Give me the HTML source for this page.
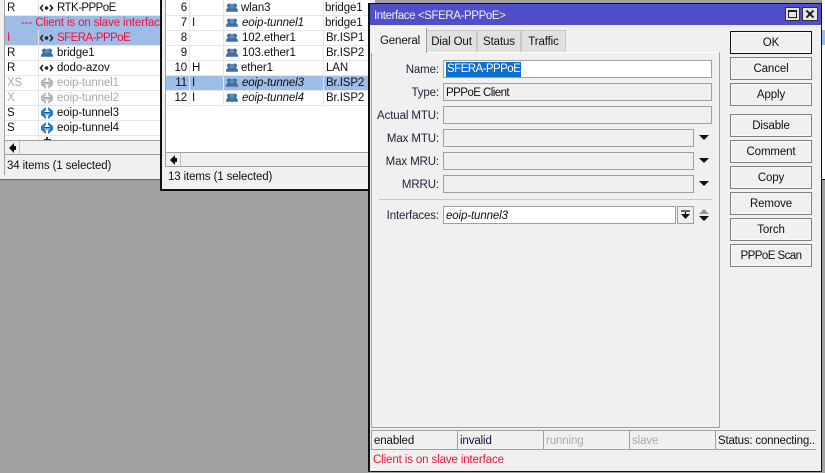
<!DOCTYPE html>
<html><head><meta charset="utf-8">
<style>
html,body{margin:0;padding:0}
body{width:825px;height:473px;background:#a0a0a0;position:relative;overflow:hidden;font:11.5px/15px "Liberation Sans",sans-serif;letter-spacing:-.12px;color:#101010}
div{box-sizing:border-box;position:absolute;white-space:nowrap}
.t{height:15px;line-height:17px}
.rl{height:1px;background:#e6e6e6}
.cl{width:1px;background:#e6e6e6}
.sb{background:#f0f0f0}
.f{background:#f0f0f0;border:1px solid #a0a0a0;height:18px;line-height:18px;padding-left:2px}
.w{background:#fff}
.l{text-align:right;width:70px;left:369px;height:18px;line-height:20px;color:#22223a}
.b{left:730px;width:82px;height:23px;border:1px solid #808080;background:#f0f0f0;text-align:center;line-height:22px;box-shadow:inset 0 0 0 1px #f8f8f8}
.tab{background:#e1e1e1;border:1px solid #c8c8c8;border-bottom:0;top:30px;height:22px;line-height:23px;text-align:center}
.s{top:430px;height:20px;border-top:1px solid #a0a0a0;border-left:1px solid #a0a0a0;line-height:20px;padding-left:2px;background:#f0f0f0;border-bottom:1px solid #a0a0a0}
.cp{letter-spacing:-.55px}
svg{position:absolute;overflow:visible}
.g{color:#aaa}.r{color:#f0103c}.i{font-style:italic}
</style></head><body>
<svg width="0" height="0" style="position:absolute"><defs>
<g id="p" transform="scale(.8)"><circle cx="4" cy="3.500" r="2.800" fill="#3f6f9f"/><circle cx="11" cy="3.500" r="2.800" fill="#3f6f9f"/><circle cx="7.500" cy="4" r="3" fill="#5b8bbb"/><path d="M0 11c0-4 2-5 4-5s3 1 3.500 1 1.500-1 3.500-1 4 1 4 5z" fill="#3f6f9f"/></g>
<g id="e"><circle cx="6.500" cy="5" r="1.800" fill="#222"/><path d="M3 2L0.500 5 3 8M10 2l2.500 3L10 8" fill="none" stroke="#222" stroke-width="1.600"/></g>
<g id="tb"><path d="M5 0L0 4V8L5 12V9L3 7V5L5 3zM7 0L12 4V8L7 12V9L9 7V5L7 3z" fill="#1f7fd8"/><path d="M3 5.500H9M3 7H9" stroke="#14508f" stroke-width="1"/></g>
<g id="tg"><path d="M5 0L0 4V8L5 12V9L3 7V5L5 3zM7 0L12 4V8L7 12V9L9 7V5L7 3z" fill="#b8b8b8"/><path d="M3 5.500H9M3 7H9" stroke="#999" stroke-width="1"/></g>
<path id="dn" d="M0 0h10L5 5z" fill="#111"/>
<path id="lt" d="M5 0v3h2v4H5v3L0 5z" fill="#111"/>
</defs></svg>

<!-- rear window strip -->
<div style="left:822px;top:0;width:3px;height:179px;background:#fff"></div>
<div style="left:822px;top:30px;width:3px;height:15px;background:#9dbde6"></div>
<div style="left:822px;top:179px;width:3px;height:1px;background:#111"></div>

<!-- left window -->
<div style="left:0;top:0;width:162px;height:180px;background:#f0f0f0;border-right:2px solid #111;border-bottom:1px solid #666"></div>
<div style="left:4px;top:0;width:156px;height:175px;background:#fff;border-left:1px solid #a0a0a0"></div>
<div style="left:5px;top:15px;width:155px;height:15px;background:#9dbde6"></div>
<div style="left:5px;top:30px;width:155px;height:15px;background:#9dbde6"></div>
<div class="rl" style="left:5px;top:15px;width:155px"></div><div class="rl" style="left:5px;top:45px;width:155px"></div><div class="rl" style="left:5px;top:60px;width:155px"></div><div class="rl" style="left:5px;top:75px;width:155px"></div><div class="rl" style="left:5px;top:90px;width:155px"></div><div class="rl" style="left:5px;top:105px;width:155px"></div><div class="rl" style="left:5px;top:120px;width:155px"></div><div class="rl" style="left:5px;top:135px;width:155px"></div>
<div class="cl" style="left:38px;top:0;height:15px"></div><div class="cl" style="left:38px;top:30px;height:110px"></div>
<div class="t" style="left:7px;top:0">R</div><div class="t cp" style="left:57px;top:0">RTK-PPPoE</div>
<svg style="left:40px;top:3px" width="13" height="10"><use href="#e"/></svg>
<div class="t r" style="left:21px;top:15px">--- Client is on slave interface</div>
<div class="t r" style="left:7px;top:30px">I</div><div class="t r cp" style="left:57px;top:30px">SFERA-PPPoE</div>
<svg style="left:40px;top:33px" width="13" height="10"><use href="#e"/></svg>
<div class="t" style="left:7px;top:45px">R</div><div class="t" style="left:57px;top:45px">bridge1</div>
<svg style="left:41px;top:48px" width="12" height="9"><use href="#p"/></svg>
<div class="t" style="left:7px;top:60px">R</div><div class="t" style="left:57px;top:60px">dodo-azov</div>
<svg style="left:40px;top:63px" width="13" height="10"><use href="#e"/></svg>
<div class="t g" style="left:7px;top:75px">XS</div><div class="t g" style="left:57px;top:75px">eoip-tunnel1</div>
<svg style="left:41px;top:77px" width="12" height="12"><use href="#tg"/></svg>
<div class="t g" style="left:7px;top:90px">X</div><div class="t g" style="left:57px;top:90px">eoip-tunnel2</div>
<svg style="left:41px;top:92px" width="12" height="12"><use href="#tg"/></svg>
<div class="t" style="left:7px;top:105px">S</div><div class="t" style="left:57px;top:105px">eoip-tunnel3</div>
<svg style="left:41px;top:107px" width="12" height="12"><use href="#tb"/></svg>
<div class="t" style="left:7px;top:120px">S</div><div class="t" style="left:57px;top:120px">eoip-tunnel4</div>
<svg style="left:41px;top:122px" width="12" height="12"><use href="#tb"/></svg>
<svg style="left:44px;top:137px" width="7" height="3"><path d="M3 0v3M0 3h7" stroke="#333" stroke-width="2"/></svg>
<div class="sb" style="left:5px;top:140px;width:155px;height:15px;border-top:1px solid #a0a0a0;border-bottom:1px solid #a0a0a0"></div>
<div style="left:5px;top:141px;width:15px;height:13px;background:#f0f0f0;border-right:1px solid #c0c0c0"></div>
<svg style="left:9px;top:143px" width="7" height="10"><use href="#lt"/></svg>
<div style="left:5px;top:155px;width:155px;height:20px;background:#f0f0f0"></div>
<div class="t" style="left:7px;top:158px">34 items (1 selected)</div>

<!-- middle window -->
<div style="left:160px;top:0;width:215px;height:191px;background:#f0f0f0;border-left:2px solid #111;border-bottom:2px solid #111"></div>
<div style="left:165px;top:0;width:204px;height:152px;background:#fff;border-left:1px solid #a0a0a0"></div>
<div style="left:166px;top:75px;width:203px;height:15px;background:#9dbde6"></div>
<div class="rl" style="left:166px;top:15px;width:203px"></div><div class="rl" style="left:166px;top:30px;width:203px"></div><div class="rl" style="left:166px;top:45px;width:203px"></div><div class="rl" style="left:166px;top:60px;width:203px"></div><div class="rl" style="left:166px;top:75px;width:203px"></div><div class="rl" style="left:166px;top:90px;width:203px"></div><div class="rl" style="left:166px;top:105px;width:203px"></div>
<div class="cl" style="left:189px;top:0;height:105px"></div><div class="cl" style="left:223px;top:0;height:105px"></div><div class="cl" style="left:323px;top:0;height:105px"></div>
<div class="t" style="left:167px;width:20px;text-align:right;top:0">6</div><div class="t" style="left:241px;top:0">wlan3</div><div class="t" style="left:325px;top:0">bridge1</div>
<div class="t" style="left:167px;width:20px;text-align:right;top:15px">7</div><div class="t" style="left:192px;top:15px">I</div><div class="t i" style="left:242px;top:15px">eoip-tunnel1</div><div class="t" style="left:325px;top:15px">bridge1</div>
<div class="t" style="left:167px;width:20px;text-align:right;top:30px">8</div><div class="t" style="left:242px;top:30px">102.ether1</div><div class="t" style="left:326px;top:30px">Br.ISP1</div>
<div class="t" style="left:167px;width:20px;text-align:right;top:45px">9</div><div class="t" style="left:242px;top:45px">103.ether1</div><div class="t" style="left:326px;top:45px">Br.ISP2</div>
<div class="t" style="left:167px;width:20px;text-align:right;top:60px">10</div><div class="t" style="left:192px;top:60px">H</div><div class="t" style="left:241px;top:60px">ether1</div><div class="t" style="left:326px;top:60px">LAN</div>
<div class="t" style="left:167px;width:20px;text-align:right;top:75px">11</div><div class="t" style="left:192px;top:75px">I</div><div class="t i" style="left:242px;top:75px">eoip-tunnel3</div><div class="t" style="left:326px;top:75px">Br.ISP2</div>
<div class="t" style="left:167px;width:20px;text-align:right;top:90px">12</div><div class="t" style="left:192px;top:90px">I</div><div class="t i" style="left:242px;top:90px">eoip-tunnel4</div><div class="t" style="left:326px;top:90px">Br.ISP2</div>
<svg style="left:226px;top:3px" width="12" height="9"><use href="#p"/></svg>
<svg style="left:226px;top:18px" width="12" height="9"><use href="#p"/></svg>
<svg style="left:226px;top:33px" width="12" height="9"><use href="#p"/></svg>
<svg style="left:226px;top:48px" width="12" height="9"><use href="#p"/></svg>
<svg style="left:226px;top:63px" width="12" height="9"><use href="#p"/></svg>
<svg style="left:226px;top:78px" width="12" height="9"><use href="#p"/></svg>
<svg style="left:226px;top:93px" width="12" height="9"><use href="#p"/></svg>
<div class="sb" style="left:165px;top:152px;width:204px;height:15px;border-top:1px solid #a0a0a0;border-bottom:1px solid #a0a0a0;border-left:1px solid #a0a0a0"></div>
<div style="left:166px;top:153px;width:15px;height:13px;background:#f0f0f0;border-right:1px solid #c0c0c0"></div>
<svg style="left:170px;top:155px" width="7" height="10"><use href="#lt"/></svg>
<div class="t" style="left:168px;top:169px">13 items (1 selected)</div>

<!-- dialog -->
<div style="left:368px;top:3px;width:454px;height:469px;background:#f0f0f0;border:1px solid #111;border-left-width:2px"></div>
<div style="left:370px;top:4px;width:451px;height:21px;background:#4f50c9;color:#f0f0f0;line-height:25px;padding-left:4px;letter-spacing:-.4px">Interface &lt;SFERA-PPPoE&gt;</div>
<div style="left:785px;top:7px;width:15px;height:14px;background:#e4e4e4;border:1px solid #333"></div>
<div style="left:788px;top:10px;width:9px;height:8px;border:1px solid #222;border-top-width:2px"></div>
<div style="left:802px;top:7px;width:16px;height:14px;background:#e4e4e4;border:1px solid #333"></div>
<svg style="left:806px;top:10px" width="8" height="8"><path d="M0.500 0.500l7 7M7.500 0.500l-7 7" stroke="#111" stroke-width="1.900"/></svg>

<div style="left:371px;top:52px;width:349px;height:376px;border:1px solid #a0a0a0;border-top:1px solid #fff;background:#f0f0f0"></div>
<div class="tab" style="left:426px;width:51px">Dial Out</div>
<div class="tab" style="left:477px;width:44px">Status</div>
<div class="tab" style="left:521px;width:45px">Traffic</div>
<div style="left:373px;top:27px;width:54px;height:26px;background:#f0f0f0;border:1px solid #fff;border-right:1px solid #a0a0a0;border-bottom:0;line-height:26px;text-align:center">General</div>

<div class="l" style="top:60px">Name:</div>
<div class="f w" style="left:443px;top:60px;width:269px"><span class="cp" style="background:#0f6fd0;color:#fff;display:inline-block;line-height:15px;padding:0 1px;margin-left:0;vertical-align:top;margin-top:1px">SFERA-PPPoE</span></div>
<div class="l" style="top:83px">Type:</div>
<div class="f cp" style="left:443px;top:83px;width:269px">PPPoE Client</div>
<div class="l" style="top:106px">Actual MTU:</div>
<div class="f" style="left:443px;top:106px;width:269px"></div>
<div class="l" style="top:129px">Max MTU:</div>
<div class="f" style="left:443px;top:129px;width:251px"></div>
<svg style="left:699px;top:135px" width="10" height="6"><use href="#dn"/></svg>
<div class="l" style="top:152px">Max MRU:</div>
<div class="f" style="left:443px;top:152px;width:251px"></div>
<svg style="left:699px;top:158px" width="10" height="6"><use href="#dn"/></svg>
<div class="l" style="top:175px">MRRU:</div>
<div class="f" style="left:443px;top:175px;width:251px"></div>
<svg style="left:699px;top:181px" width="10" height="6"><use href="#dn"/></svg>
<div style="left:379px;top:199px;width:333px;height:1px;background:#c8c8c8"></div>
<div class="l" style="top:206px">Interfaces:</div>
<div class="f w i" style="left:443px;top:206px;width:233px">eoip-tunnel3</div>
<div style="left:677px;top:206px;width:17px;height:18px;border:1px solid #a0a0a0;background:#f0f0f0"></div>
<svg style="left:681px;top:211px" width="9" height="8"><path d="M0 0h9M4.500 1v2" stroke="#111" stroke-width="1.200"/><path d="M0 3h9L4.500 8z" fill="#111"/></svg>
<svg style="left:699px;top:209px" width="10" height="13"><path d="M0 5h10L5 0z" fill="#8a9a8a"/><path d="M0 7h10L5 12z" fill="#111"/></svg>

<div class="b" style="top:31px;border-color:#111">OK</div>
<div class="b" style="top:57px">Cancel</div>
<div class="b" style="top:83px">Apply</div>
<div class="b" style="top:114px">Disable</div>
<div class="b" style="top:140px">Comment</div>
<div class="b" style="top:166px">Copy</div>
<div class="b" style="top:192px">Remove</div>
<div class="b" style="top:218px">Torch</div>
<div class="b cp" style="top:244px">PPPoE Scan</div>

<div class="s" style="left:371px;width:86px;color:#101010">enabled</div>
<div class="s" style="left:457px;width:86px;color:#101040">invalid</div>
<div class="s g" style="left:543px;width:86px">running</div>
<div class="s g" style="left:629px;width:86px">slave</div>
<div class="s" style="left:715px;width:101px;border-right:0;overflow:hidden;letter-spacing:-.2px">Status: connecting...</div>
<div style="left:371px;top:450px;width:445px;height:20px;line-height:20px;padding-left:2px;color:#f0103c;background:#f0f0f0">Client is on slave interface</div>
</body></html>
